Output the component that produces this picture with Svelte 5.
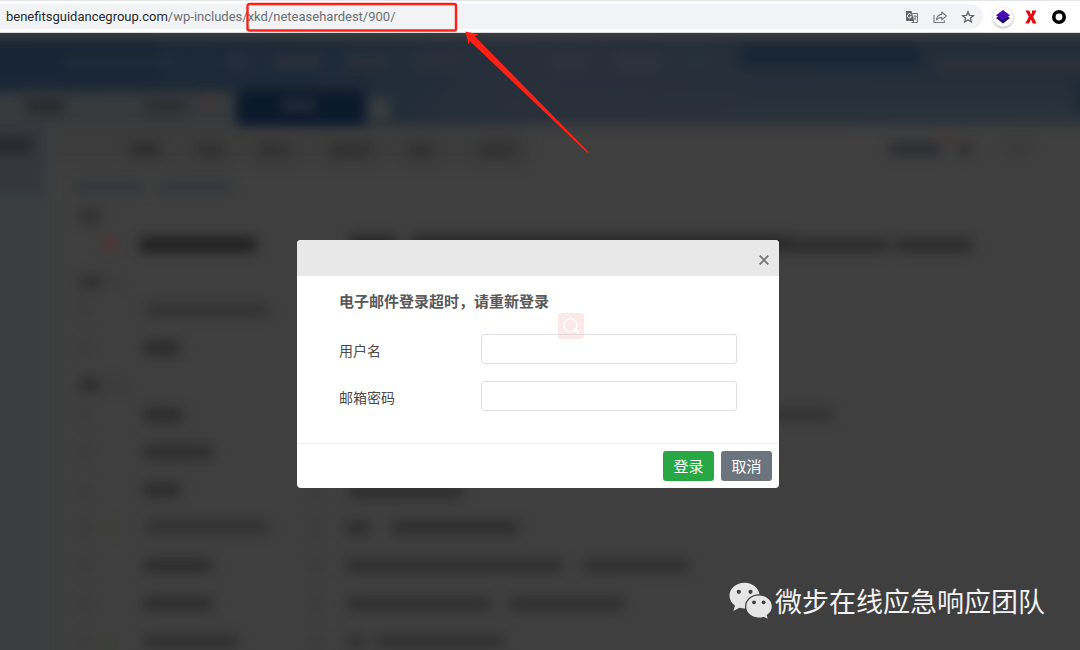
<script>
  let username = $state('');
  let password = $state('');

  // Blurred mailbox behind the dialog: [x, y, width, height, colour]
  const header = [
    [-60, 40, 220, 40, '#172536'],
    [196, 50, 30, 36, '#1b2938'],
    [740, 44, 180, 24, '#182635'],
    [1076, 78, 80, 36, '#1b2836'],
    [-60, 92, 290, 34, '#383a3c'],
    [225, 92, 14, 34, '#35393c'],
    [368, 98, 22, 22, '#383d40'],
    [936, 56, 200, 18, '#2a3038'],
    [64, 58, 110, 8, '#212d38'],
    [226, 54, 20, 14, '#26313c'],
    [274, 54, 48, 14, '#29303a'],
    [346, 54, 42, 14, '#2a313b'],
    [412, 54, 50, 14, '#2a313a'],
    [552, 54, 36, 14, '#2c333c'],
    [616, 54, 46, 14, '#2d343d'],
    [686, 54, 24, 14, '#27323d']
  ];
  const tabs = [
    [26, 98, 38, 16, '#292b2c'],
    [144, 98, 44, 16, '#2d3032'],
    [204, 94, 10, 10, '#443233']
  ];
  const tools = [
    [-10, 138, 42, 14, '#25282e'],
    [130, 143, 30, 13, '#2d2d2d'],
    [196, 143, 28, 13, '#303030'],
    [258, 143, 32, 13, '#313131'],
    [330, 143, 42, 13, '#303030'],
    [408, 143, 26, 13, '#303030'],
    [478, 143, 38, 13, '#303030'],
    [890, 142, 50, 14, '#2c2e33'],
    [938, 134, 18, 8, '#463636'],
    [958, 142, 14, 14, '#323232'],
    [1006, 144, 22, 10, '#383838'],
    [76, 181, 66, 12, '#33373b'],
    [158, 181, 72, 12, '#33373b']
  ];
  const rows = [
    [80, 209, 20, 14, '#303030'],
    [106, 239, 8, 10, '#672828'],
    [140, 237, 116, 15, '#202020'],
    [350, 236, 46, 14, '#242424'],
    [412, 236, 380, 15, '#242424'],
    [778, 238, 110, 14, '#2c2c2c'],
    [896, 238, 76, 14, '#2c2c2c'],
    [80, 275, 22, 14, '#303030'],
    [110, 277, 12, 10, '#3a3a3a'],
    [146, 304, 122, 12, '#313131'],
    [144, 341, 36, 14, '#2b2b2b'],
    [80, 378, 20, 14, '#2d2d2d'],
    [110, 380, 14, 10, '#3a3a3a'],
    [144, 408, 38, 14, '#2c2c2c'],
    [770, 408, 62, 12, '#313131'],
    [144, 445, 68, 14, '#2d2d2d'],
    [144, 483, 36, 14, '#2c2c2c'],
    [350, 486, 112, 12, '#2c2c2c'],
    [146, 521, 122, 12, '#313131'],
    [104, 523, 9, 10, '#3a4331'],
    [346, 521, 24, 13, '#2d2d2d'],
    [392, 521, 126, 13, '#2d2d2d'],
    [144, 559, 68, 13, '#2c2c2c'],
    [346, 559, 216, 13, '#2e2e2e'],
    [584, 559, 104, 13, '#2e2e2e'],
    [144, 597, 68, 13, '#2c2c2c'],
    [348, 597, 142, 13, '#2f2f2f'],
    [510, 597, 114, 13, '#2f2f2f'],
    [144, 635, 94, 13, '#2f2f2f'],
    [104, 637, 9, 10, '#3a4232'],
    [346, 635, 20, 13, '#323232'],
    [376, 635, 128, 13, '#303030']
  ];
  const markers = [304, 342, 409, 447, 484, 522, 560, 598, 636];
</script>

<div class="page">
  <header class="bar">
    <div class="address">
      <span class="url"><b>benefitsguidancegroup.com</b>/wp-includes/xkd/neteasehardest/900/</span>
      <button class="tool" aria-label="Translate">
        <svg width="14" height="14" viewBox="0 0 14 14">
          <path d="M6 3.500h6.500v9H6.500" fill="none" stroke="#74787c" />
          <path d="M1 1h5.500l2.700 10H2a1 1 0 0 1-1-1z" fill="#5f6367" />
          <path d="M6.300 4.700A2.100 2.100 0 1 0 6.500 6.700H4.800" fill="none" stroke="#f1f3f4" stroke-width="1" />
          <path d="M8.300 6.200h3.600M10 5.200v1M11.200 6.200c-.3 1.600-1.200 2.800-2.300 3.700M9 7.400c.6 1.200 1.400 2 2.400 2.600M7 13l2-2" fill="none" stroke="#74787c" stroke-width=".9" />
        </svg>
      </button>
      <button class="tool" aria-label="Share">
        <svg width="14" height="14" viewBox="0 0 14 14" fill="none" stroke="#74787c" stroke-width="1.100" stroke-linejoin="round">
          <path d="M1 5v7.500h10.300v-2" />
          <path d="M3.400 10C3.700 6.600 5.700 4.700 8.800 4.400V2L13.300 6 8.800 9.800V7.400C6.500 7.400 4.800 8.200 3.400 10z" />
        </svg>
      </button>
      <button class="tool" aria-label="Bookmark">
        <svg width="14" height="14" viewBox="0 0 14 14" fill="none" stroke="#5f6368" stroke-width="1.300" stroke-linejoin="miter">
          <path d="M7 1.700l1.500 3.600 3.900.35-2.950 2.560.9 3.800L7 10l-3.350 2.010.9-3.800L1.600 5.650l3.900-.35z" />
        </svg>
      </button>
    </div>
    <button class="ext round" aria-label="Layers">
      <svg width="16" height="16" viewBox="0 0 16 16">
        <path d="M1 9l7-4 7 4-7 5.500z" fill="#1d0a6e" />
        <path d="M8 1l7 5.200-7 5.200-7-5.200z" fill="#4a0ab5" />
      </svg>
    </button>
    <button class="ext" aria-label="X">
      <svg width="12" height="14" viewBox="0 0 12 14">
        <path d="M.5.5h3.800l1.700 4 1-1.800V.5h4.500L8.200 6.700l3.300 6.800H7.700L5.900 9.200 4 13.500H.3l3.500-6.800z" fill="#e8080c" />
      </svg>
    </button>
    <button class="ext" aria-label="Circle">
      <svg width="16" height="16" viewBox="0 0 16 16"><circle cx="8" cy="8" r="5.200" fill="none" stroke="#000" stroke-width="3.600" /></svg>
    </button>
  </header>

  <main class="stage">
    <svg class="scene" viewBox="0 33 1080 617" preserveAspectRatio="xMidYMin slice" aria-hidden="true">
      <defs>
        <linearGradient id="sky" x1="0" y1="0" x2="0" y2="1">
          <stop offset="0" stop-color="#1f2b37" />
          <stop offset=".5" stop-color="#242e38" />
          <stop offset="1" stop-color="#2d343b" />
        </linearGradient>
        <linearGradient id="skyLeft">
          <stop offset="0" stop-color="#1a2838" />
          <stop offset=".3" stop-color="#1b2937" stop-opacity=".8" />
          <stop offset=".5" stop-color="#2a303b" stop-opacity=".8" />
          <stop offset="1" stop-color="#242e38" stop-opacity="0" />
        </linearGradient>
        <filter id="soft" x="-10%" y="-10%" width="120%" height="120%" color-interpolation-filters="sRGB"><feGaussianBlur stdDeviation="6" /></filter>
      </defs>
      <rect y="33" width="1080" height="617" fill="#3f3f3f" />
      <g filter="url(#soft)">
        <rect x="-60" y="126" width="110" height="600" fill="#3b3d3f" />
        <rect x="-60" y="126" width="104" height="70" fill="#34383d" />
        <rect x="50" y="128" width="480" height="36" fill="#3c3c3c" />
        <rect x="-60" y="38" width="1200" height="87" fill="url(#sky)" />
        <rect x="-60" y="38" width="1200" height="87" fill="url(#skyLeft)" />
        {#each header as [x, y, width, height, fill]}
          <rect {x} {y} {width} {height} {fill} />
        {/each}
      </g>
      <g filter="url(#soft)">
        <rect x="238" y="90" width="126" height="34" fill="#0b192c" />
        <rect x="282" y="98" width="34" height="14" fill="#212834" />
        {#each [...tabs, ...tools, ...rows] as [x, y, width, height, fill]}
          <rect {x} {y} {width} {height} {fill} />
        {/each}
        {#each markers as y}
          <rect x="82" {y} width="6" height="12" fill="#383838" />
          <rect x="312" {y} width="8" height="12" fill="#383838" />
        {/each}
      </g>
    </svg>

    <form class="dialog" aria-labelledby="title" onsubmit={(e) => e.preventDefault()}>
      <div class="top">
        <button type="button" class="close" aria-label="关闭">
          <svg width="10" height="10" viewBox="0 0 10 10"><path d="M.7.700l8.600 8.600M9.300.7L.7 9.300" stroke="#737373" stroke-width="1.900" /></svg>
        </button>
      </div>
      <div class="body">
        <h1 id="title">电子邮件登录超时，请重新登录</h1>
        <div class="field">
          <label for="user">用户名</label>
          <input id="user" type="text" bind:value={username} />
        </div>
        <div class="field">
          <label for="pass">邮箱密码</label>
          <input id="pass" type="password" bind:value={password} />
        </div>
        <svg class="lens" width="26" height="26" viewBox="0 0 26 26" aria-hidden="true">
          <rect width="26" height="26" rx="3" fill="#f6c6c9" fill-opacity=".4" />
          <circle cx="12.500" cy="12.300" r="6.600" fill="none" stroke="#fff" stroke-width="1.400" />
          <path d="M17.300 16.800l2.700 2.500" stroke="#fff" stroke-width="3" stroke-linecap="round" />
        </svg>
      </div>
      <div class="actions">
        <button type="submit" class="btn login">登录</button>
        <button type="button" class="btn cancel">取消</button>
      </div>
    </form>

    <div class="credit">
      <svg width="44" height="38" viewBox="0 0 44 38" aria-hidden="true">
        <path d="M15.500.8C7.200.8.500 6.500.500 13.700c0 4 2.100 7.500 5.500 9.900L4.400 29l6-3.200c1.600.5 3.300.8 5.100.8 8.300 0 15-5.700 15-12.900S23.800.8 15.500.8z" fill="#e6e6e6" />
        <path d="M30 12.800c-7.400 0-13.400 5.200-13.400 11.700S22.600 36.200 30 36.200c1.600 0 3.100-.2 4.500-.7l5.200 2.300-1.300-4.500c3-2.100 5-5.300 5-8.800 0-6.500-6-11.700-13.400-11.700z" fill="#e6e6e6" stroke="#3f3f3f" stroke-width="1.200" />
        <g fill="#3f3f3f"><circle cx="9.800" cy="9.800" r="2.100" /><circle cx="21.500" cy="9.800" r="2.100" /><circle cx="25" cy="20.300" r="1.900" /><circle cx="34.600" cy="20.300" r="1.900" /></g>
      </svg>
      <span>微步在线应急响应团队</span>
    </div>
  </main>

  <svg class="notes" width="600" height="160" viewBox="0 0 600 160" aria-hidden="true">
    <rect x="247.500" y="4" width="208.500" height="26.500" rx="2" fill="none" stroke="#ff2015" stroke-width="2.400" />
    <path d="M465.500 31.500L478.500 34.500 474.500 36 588.500 152 587.500 153 469.800 41 468.700 45z" fill="#ff2015" />
  </svg>
</div>

<style>
  :global(body) { margin: 0; }
  .page {
    position: relative;
    min-height: 100vh;
    display: flex;
    flex-direction: column;
    font-family: "Noto Sans CJK SC", sans-serif;
    overflow: hidden;
  }
  button { border: 0; padding: 0; background: none; cursor: pointer; font-family: inherit; }
  svg { display: block; }
  .bar {
    box-sizing: border-box;
    height: 33px;
    padding: 3px 11px 3px 0;
    display: flex;
    align-items: center;
    gap: 8px;
    background: #fff;
    border-top: 1px solid #e3e5ea;
    border-bottom: 1px solid #dadce0;
  }
  .address {
    flex: 1;
    min-width: 0;
    height: 25px;
    margin-right: 2px;
    padding: 0 8px 0 6px;
    display: flex;
    align-items: center;
    gap: 14px;
    background: #f1f3f4;
    border-radius: 0 13px 13px 0;
  }
  .url {
    flex: 1;
    min-width: 0;
    overflow: hidden;
    white-space: nowrap;
    font: 13px/20px Roboto, "Open Sans", sans-serif;
    color: #6b6f73;
  }
  .url b { font-weight: 400; color: #27292c; }
  .ext { width: 20px; height: 20px; display: grid; place-items: center; }
  .round { border-radius: 50%; box-shadow: 0 1px 3px #0005; }
  .stage {
    position: relative;
    flex: 1;
    padding: 207px 4px 30px 0;
    display: flex;
    flex-direction: column;
    align-items: center;
    background: #3f3f3f;
  }
  .scene { position: absolute; inset: 0; width: 100%; height: 100%; }
  .dialog {
    position: relative;
    width: 482px;
    max-width: 100%;
    background: #fff;
    border-radius: 4px;
    overflow: hidden;
  }
  .top {
    height: 36px;
    padding: 4px 10px 0 0;
    box-sizing: border-box;
    display: flex;
    align-items: center;
    justify-content: flex-end;
    background: #e8e8e8;
  }
  .body { position: relative; padding: 13px 42px 32px; }
  h1 { margin: 0 0 21px; font-size: 15px; line-height: 24px; font-weight: 700; color: #595959; }
  .field { display: flex; align-items: center; margin-bottom: 17px; }
  .field:last-of-type { margin-bottom: 0; }
  label { flex: 0 0 142px; padding-top: 2px; box-sizing: border-box; font-size: 14px; line-height: 20px; color: #4a4a4a; }
  input {
    flex: 1;
    min-width: 0;
    height: 30px;
    box-sizing: border-box;
    padding: 4px 8px;
    border: 1px solid #dcdfe4;
    border-radius: 3px;
    font-size: 14px;
  }
  .lens { position: absolute; left: 261px; top: 37px; }
  .actions {
    padding: 7px;
    display: flex;
    justify-content: flex-end;
    gap: 7px;
    border-top: 1px solid #f0f0f0;
  }
  .btn { width: 51px; height: 30px; border-radius: 3px; color: #fff; font-size: 15px; line-height: 30px; }
  .login { background: #28a745; }
  .cancel { background: #6c757d; }
  .credit {
    position: relative;
    align-self: flex-end;
    margin: auto 31px 0 0;
    display: flex;
    align-items: center;
    gap: 2px;
    font-size: 27px;
    line-height: 36px;
    color: #f2f2f2;
  }
  .notes { position: absolute; left: 0; top: 0; pointer-events: none; }
</style>
